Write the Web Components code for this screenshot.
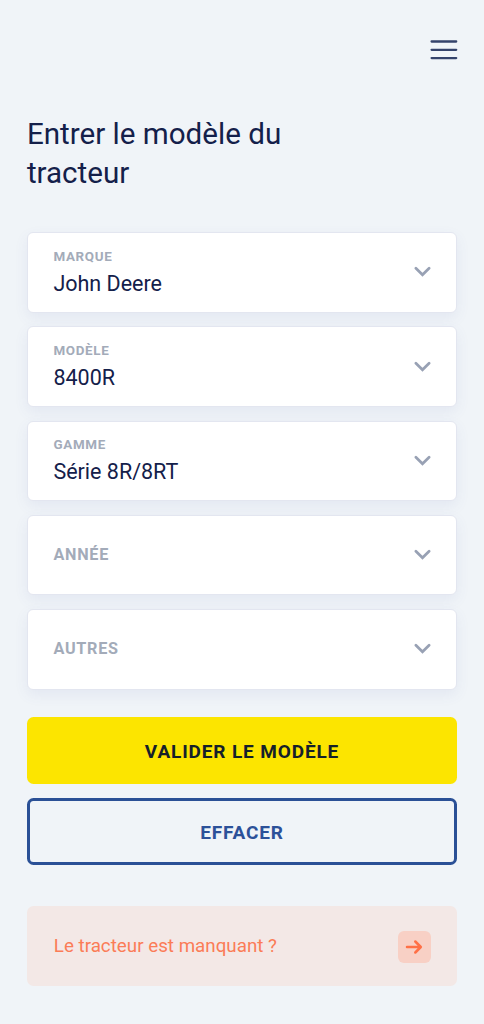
<!DOCTYPE html>
<html lang="fr">
<head>
<meta charset="utf-8">
<title>Modèle du tracteur</title>
<style>
html,body{margin:0;background:#f0f4f8}
body{font-family:Roboto,"Liberation Sans",sans-serif;color:#14204a}
</style>
</head>
<body>
<tractor-page></tractor-page>
<script>
const define = (name, html) => {
  const t = document.createElement('template');
  t.innerHTML = html;
  customElements.define(name, class extends HTMLElement {
    constructor() {
      super();
      this.attachShadow({mode: 'open'}).appendChild(t.content.cloneNode(true));
    }
  });
};

define('menu-button', `
<style>:host{display:block;width:28px;height:20px}svg{display:block;overflow:visible}</style>
<svg width="28" height="20" viewBox="0 0 28 20" fill="none" stroke="#34436b" stroke-width="2.3" stroke-linecap="round"><path d="M2.6 1.5H27.2M2.6 9.8H27.2M2.6 18.1H27.2"/></svg>`);

define('select-field', `
<style>
:host{box-sizing:border-box;display:flex;align-items:center;justify-content:space-between;height:80.6px;padding:0 25.2px 0 25.5px;border:1px solid #e3e6f0;border-radius:6px;background:#fff;box-shadow:0 5px 14px rgba(80,90,165,.08)}
.text{display:flex;flex-direction:column}
::slotted([slot=label]){font-size:13.4px;line-height:16px;font-weight:700;letter-spacing:.68px;color:#a3abb9}
:host([empty]) ::slotted([slot=label]){font-size:16.2px;line-height:20px;letter-spacing:.75px}
.value{font-size:21.5px;line-height:30px;margin-top:4px;margin-bottom:-3px}
:host([empty]) .value{display:none}
svg{display:block;flex:none}
</style>
<div class="text"><slot name="label"></slot><div class="value"><slot></slot></div></div>
<svg width="17" height="12" viewBox="0 0 17 12" fill="none" stroke="#98a1b4" stroke-width="2.7" stroke-linecap="round"><path d="M1.9 2.2L8.5 8.8L15.1 2.2"/></svg>`);

define('action-button', `
<style>
:host{box-sizing:border-box;display:flex;align-items:center;justify-content:center;height:67.2px;border-radius:6.5px;background:#fce500;color:#15202a;font-size:19px;font-weight:700;letter-spacing:.86px;padding-top:1.4px}
:host([outline]){background:none;border:3px solid #2a5096;color:#2c5199;letter-spacing:.8px;padding-top:3px}
</style>
<slot></slot>`);

define('help-link', `
<style>
:host{box-sizing:border-box;display:flex;align-items:center;justify-content:space-between;height:80.6px;padding:0 26.5px 0 26.9px;border-radius:6.5px;background:#f3e8e6;color:#fb7c57;font-size:18.8px}
.icon{width:32.5px;height:32.5px;border-radius:6px;background:#f8d0c5;display:flex;align-items:center;justify-content:center;margin-top:2px}
</style>
<span class="label"><slot></slot></span>
<span class="icon"><svg width="18" height="16" viewBox="0 0 18 16" fill="none" stroke="#ff7046" stroke-width="2.5" stroke-linecap="round" stroke-linejoin="round"><path d="M2 8H15.5M10.3 2.5L15.8 8L10.3 13.5"/></svg></span>`);

define('tractor-page', `
<style>
:host{box-sizing:border-box;display:flex;flex-direction:column;height:1024px;padding:40px 26.9px 0}
header{display:flex;justify-content:flex-end;height:20px}
h1{margin:54.5px 0 0;width:300px;height:79px;font-size:29.6px;line-height:39.4px;font-weight:400}
.fields{display:flex;flex-direction:column;gap:13.7px;margin-top:38.5px}
.actions{display:flex;flex-direction:column;gap:13.8px;margin-top:27.2px}
help-link{margin-top:40.8px}
</style>
<header><menu-button></menu-button></header>
<h1>Entrer le modèle du tracteur</h1>
<div class="fields">
<select-field><span slot="label">MARQUE</span>John Deere</select-field>
<select-field><span slot="label">MODÈLE</span>8400R</select-field>
<select-field><span slot="label">GAMME</span>Série 8R/8RT</select-field>
<select-field empty><span slot="label">ANNÉE</span></select-field>
<select-field empty><span slot="label">AUTRES</span></select-field>
</div>
<div class="actions">
<action-button>VALIDER LE MODÈLE</action-button>
<action-button outline>EFFACER</action-button>
</div>
<help-link>Le tracteur est manquant ?</help-link>`);
</script>
</body>
</html>
